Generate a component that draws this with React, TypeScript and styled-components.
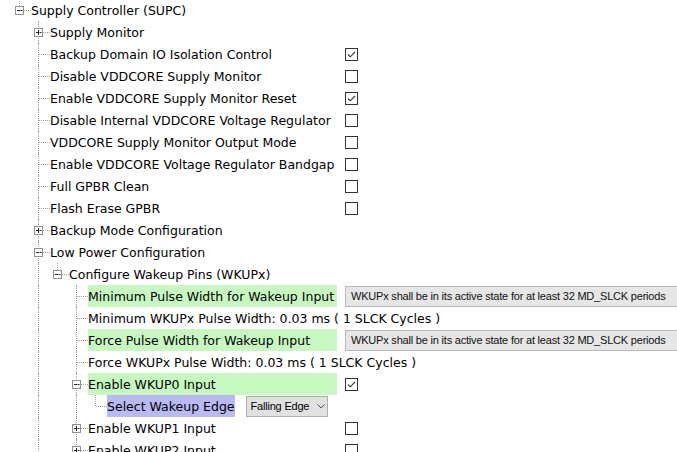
import React from "react";
import styled, { createGlobalStyle } from "styled-components";

const GlobalStyle = createGlobalStyle`
  html, body { margin: 0; padding: 0; background: #fff; overflow: hidden; }
  body {
    font-family: "DejaVu Sans", Verdana, sans-serif;
    font-size: 12.5px;
    color: #000;
  }
`;

type Value =
  | { type: "check"; checked: boolean }
  | { type: "text"; text: string }
  | { type: "combo"; text: string };

type Node = {
  level: number;
  kind: "leaf" | "plus" | "minus";
  label: string;
  next: boolean;
  value?: Value;
  hl?: "green" | "purple";
};

const FIELD = "WKUPx shall be in its active state for at least 32 MD_SLCK periods";
const CYC = "0.03 ms ( 1 SLCK Cycles )";

const rows: Node[] = [
  { level: 0, kind: "minus", label: "Supply Controller (SUPC)", next: false },
  { level: 1, kind: "plus", label: "Supply Monitor", next: true },
  { level: 1, kind: "leaf", label: "Backup Domain IO Isolation Control", next: true, value: { type: "check", checked: true } },
  { level: 1, kind: "leaf", label: "Disable VDDCORE Supply Monitor", next: true, value: { type: "check", checked: false } },
  { level: 1, kind: "leaf", label: "Enable VDDCORE Supply Monitor Reset", next: true, value: { type: "check", checked: true } },
  { level: 1, kind: "leaf", label: "Disable Internal VDDCORE Voltage Regulator", next: true, value: { type: "check", checked: false } },
  { level: 1, kind: "leaf", label: "VDDCORE Supply Monitor Output Mode", next: true, value: { type: "check", checked: false } },
  { level: 1, kind: "leaf", label: "Enable VDDCORE Voltage Regulator Bandgap", next: true, value: { type: "check", checked: false } },
  { level: 1, kind: "leaf", label: "Full GPBR Clean", next: true, value: { type: "check", checked: false } },
  { level: 1, kind: "leaf", label: "Flash Erase GPBR", next: true, value: { type: "check", checked: false } },
  { level: 1, kind: "plus", label: "Backup Mode Configuration", next: true },
  { level: 1, kind: "minus", label: "Low Power Configuration", next: true },
  { level: 2, kind: "minus", label: "Configure Wakeup Pins (WKUPx)", next: false },
  { level: 3, kind: "leaf", label: "Minimum Pulse Width for Wakeup Input", next: true, hl: "green", value: { type: "text", text: FIELD } },
  { level: 3, kind: "leaf", label: `Minimum WKUPx Pulse Width: ${CYC}`, next: true },
  { level: 3, kind: "leaf", label: "Force Pulse Width for Wakeup Input", next: true, hl: "green", value: { type: "text", text: FIELD } },
  { level: 3, kind: "leaf", label: `Force WKUPx Pulse Width: ${CYC}`, next: true },
  { level: 3, kind: "minus", label: "Enable WKUP0 Input", next: true, hl: "green", value: { type: "check", checked: true } },
  { level: 4, kind: "leaf", label: "Select Wakeup Edge", next: false, hl: "purple", value: { type: "combo", text: "Falling Edge" } },
  { level: 3, kind: "plus", label: "Enable WKUP1 Input", next: true, value: { type: "check", checked: false } },
  { level: 3, kind: "plus", label: "Enable WKUP2 Input", next: true, value: { type: "check", checked: false } },
];

const Tree = styled.div`
  display: flex;
  flex-direction: column;
  margin-top: -1px;
  padding-left: 10px;
  width: 1000px;
`;

const Row = styled.div`
  display: flex;
  align-items: stretch;
  height: 22px;
`;

const Main = styled.div`
  display: flex;
  align-items: stretch;
  width: 327px;
  flex: none;
`;

const Cell = styled.div<{ $up?: boolean; $down?: boolean; $stub?: boolean }>`
  position: relative;
  width: 19px;
  flex: none;
  &::before {
    content: "";
    display: ${(p) => (p.$up || p.$down ? "block" : "none")};
    position: absolute;
    left: 9px;
    top: ${(p) => (p.$up ? "0" : "11px")};
    bottom: ${(p) => (p.$down ? "0" : "11px")};
    border-left: 1px dotted #a0a0a0;
  }
  &::after {
    content: "";
    display: ${(p) => (p.$stub ? "block" : "none")};
    position: absolute;
    left: 10px;
    right: -2px;
    top: 11px;
    border-top: 1px dotted #a0a0a0;
  }
`;

const Expander = styled.svg`
  position: absolute;
  left: 5px;
  top: 7px;
  width: 9px;
  height: 9px;
  display: block;
`;

const Label = styled.div<{ $hl?: "green" | "purple"; $fill: boolean }>`
  display: flex;
  align-items: center;
  margin-left: 2px;
  white-space: nowrap;
  flex: ${(p) => (p.$fill ? "1 1 auto" : "none")};
  min-width: 0;
  background: ${(p) =>
    p.$hl === "green" ? "#c6f8c0" : p.$hl === "purple" ? "#b9b9f6" : "transparent"};
`;

const ValueArea = styled.div`
  display: flex;
  align-items: center;
  margin-left: 8px;
`;

const CheckBox = styled.svg`
  width: 13px;
  height: 13px;
  display: block;
`;

const TextField = styled.div`
  box-sizing: border-box;
  height: 21px;
  width: 360px;
  display: flex;
  align-items: center;
  padding-left: 5px;
  background: #e6e6e6;
  border: 1px solid #b9b9b9;
  font-family: "Liberation Sans", Arial, sans-serif;
  font-size: 11px;
  letter-spacing: -0.2px;
  color: #111;
  white-space: nowrap;
`;

const Combo = styled.div`
  box-sizing: border-box;
  align-self: center;
  height: 21px;
  width: 82px;
  margin-left: 11px;
  display: flex;
  align-items: center;
  gap: 8px;
  padding: 0 0 0 4px;
  background: #e1e1e1;
  border: 1px solid #adadad;
  font-family: "Liberation Sans", Arial, sans-serif;
  font-size: 11px;
  letter-spacing: -0.2px;
  color: #000;
  white-space: nowrap;
`;

const Chevron = styled.svg`
  width: 8px;
  height: 5px;
  display: block;
`;

function Box({ plus }: { plus: boolean }) {
  return (
    <Expander viewBox="0 0 9 9">
      <rect x="0.5" y="0.5" width="8" height="8" fill="#fff" stroke="#919191" />
      <path d="M2 4.5H7" stroke="#222" strokeWidth="1" />
      {plus && <path d="M4.5 2V7" stroke="#222" strokeWidth="1" />}
    </Expander>
  );
}

function Check({ checked }: { checked: boolean }) {
  return (
    <CheckBox viewBox="0 0 13 13">
      <rect x="0.5" y="0.5" width="12" height="12" fill="#fff" stroke="#333" />
      {checked && (
        <path d="M3 6.5L5.3 8.8L10 4" fill="none" stroke="#333" strokeWidth="1.1" />
      )}
    </CheckBox>
  );
}

function ancestorsLines(i: number): boolean[] {
  const lvl = rows[i].level;
  const res: boolean[] = [];
  for (let k = 0; k < lvl; k++) {
    let j = i - 1;
    while (j >= 0 && rows[j].level !== k) j--;
    res.push(j >= 0 ? rows[j].next : false);
  }
  return res;
}

export default function App() {
  return (
    <>
      <GlobalStyle />
      <Tree>
        {rows.map((r, i) => {
          const anc = ancestorsLines(i);
          const inlineCombo = r.value?.type === "combo";
          const fill = !!r.hl && !inlineCombo;
          return (
            <Row key={i}>
              <Main>
                {anc.map((on, k) => (
                  <Cell key={k} $up={on} $down={on} />
                ))}
                <Cell $up $down={r.next} $stub>
                  {r.kind !== "leaf" && <Box plus={r.kind === "plus"} />}
                </Cell>
                <Label $hl={r.hl} $fill={fill}>
                  {r.label}
                </Label>
                {r.value?.type === "combo" && (
                  <Combo>
                    {r.value.text}
                    <Chevron viewBox="0 0 8 5">
                      <path d="M0.5 0.5L4 4L7.5 0.5" fill="none" stroke="#555" strokeWidth="1" />
                    </Chevron>
                  </Combo>
                )}
              </Main>
              {r.value && r.value.type !== "combo" && (
                <ValueArea>
                  {r.value.type === "check" ? (
                    <Check checked={r.value.checked} />
                  ) : (
                    <TextField>{r.value.text}</TextField>
                  )}
                </ValueArea>
              )}
            </Row>
          );
        })}
      </Tree>
    </>
  );
}
